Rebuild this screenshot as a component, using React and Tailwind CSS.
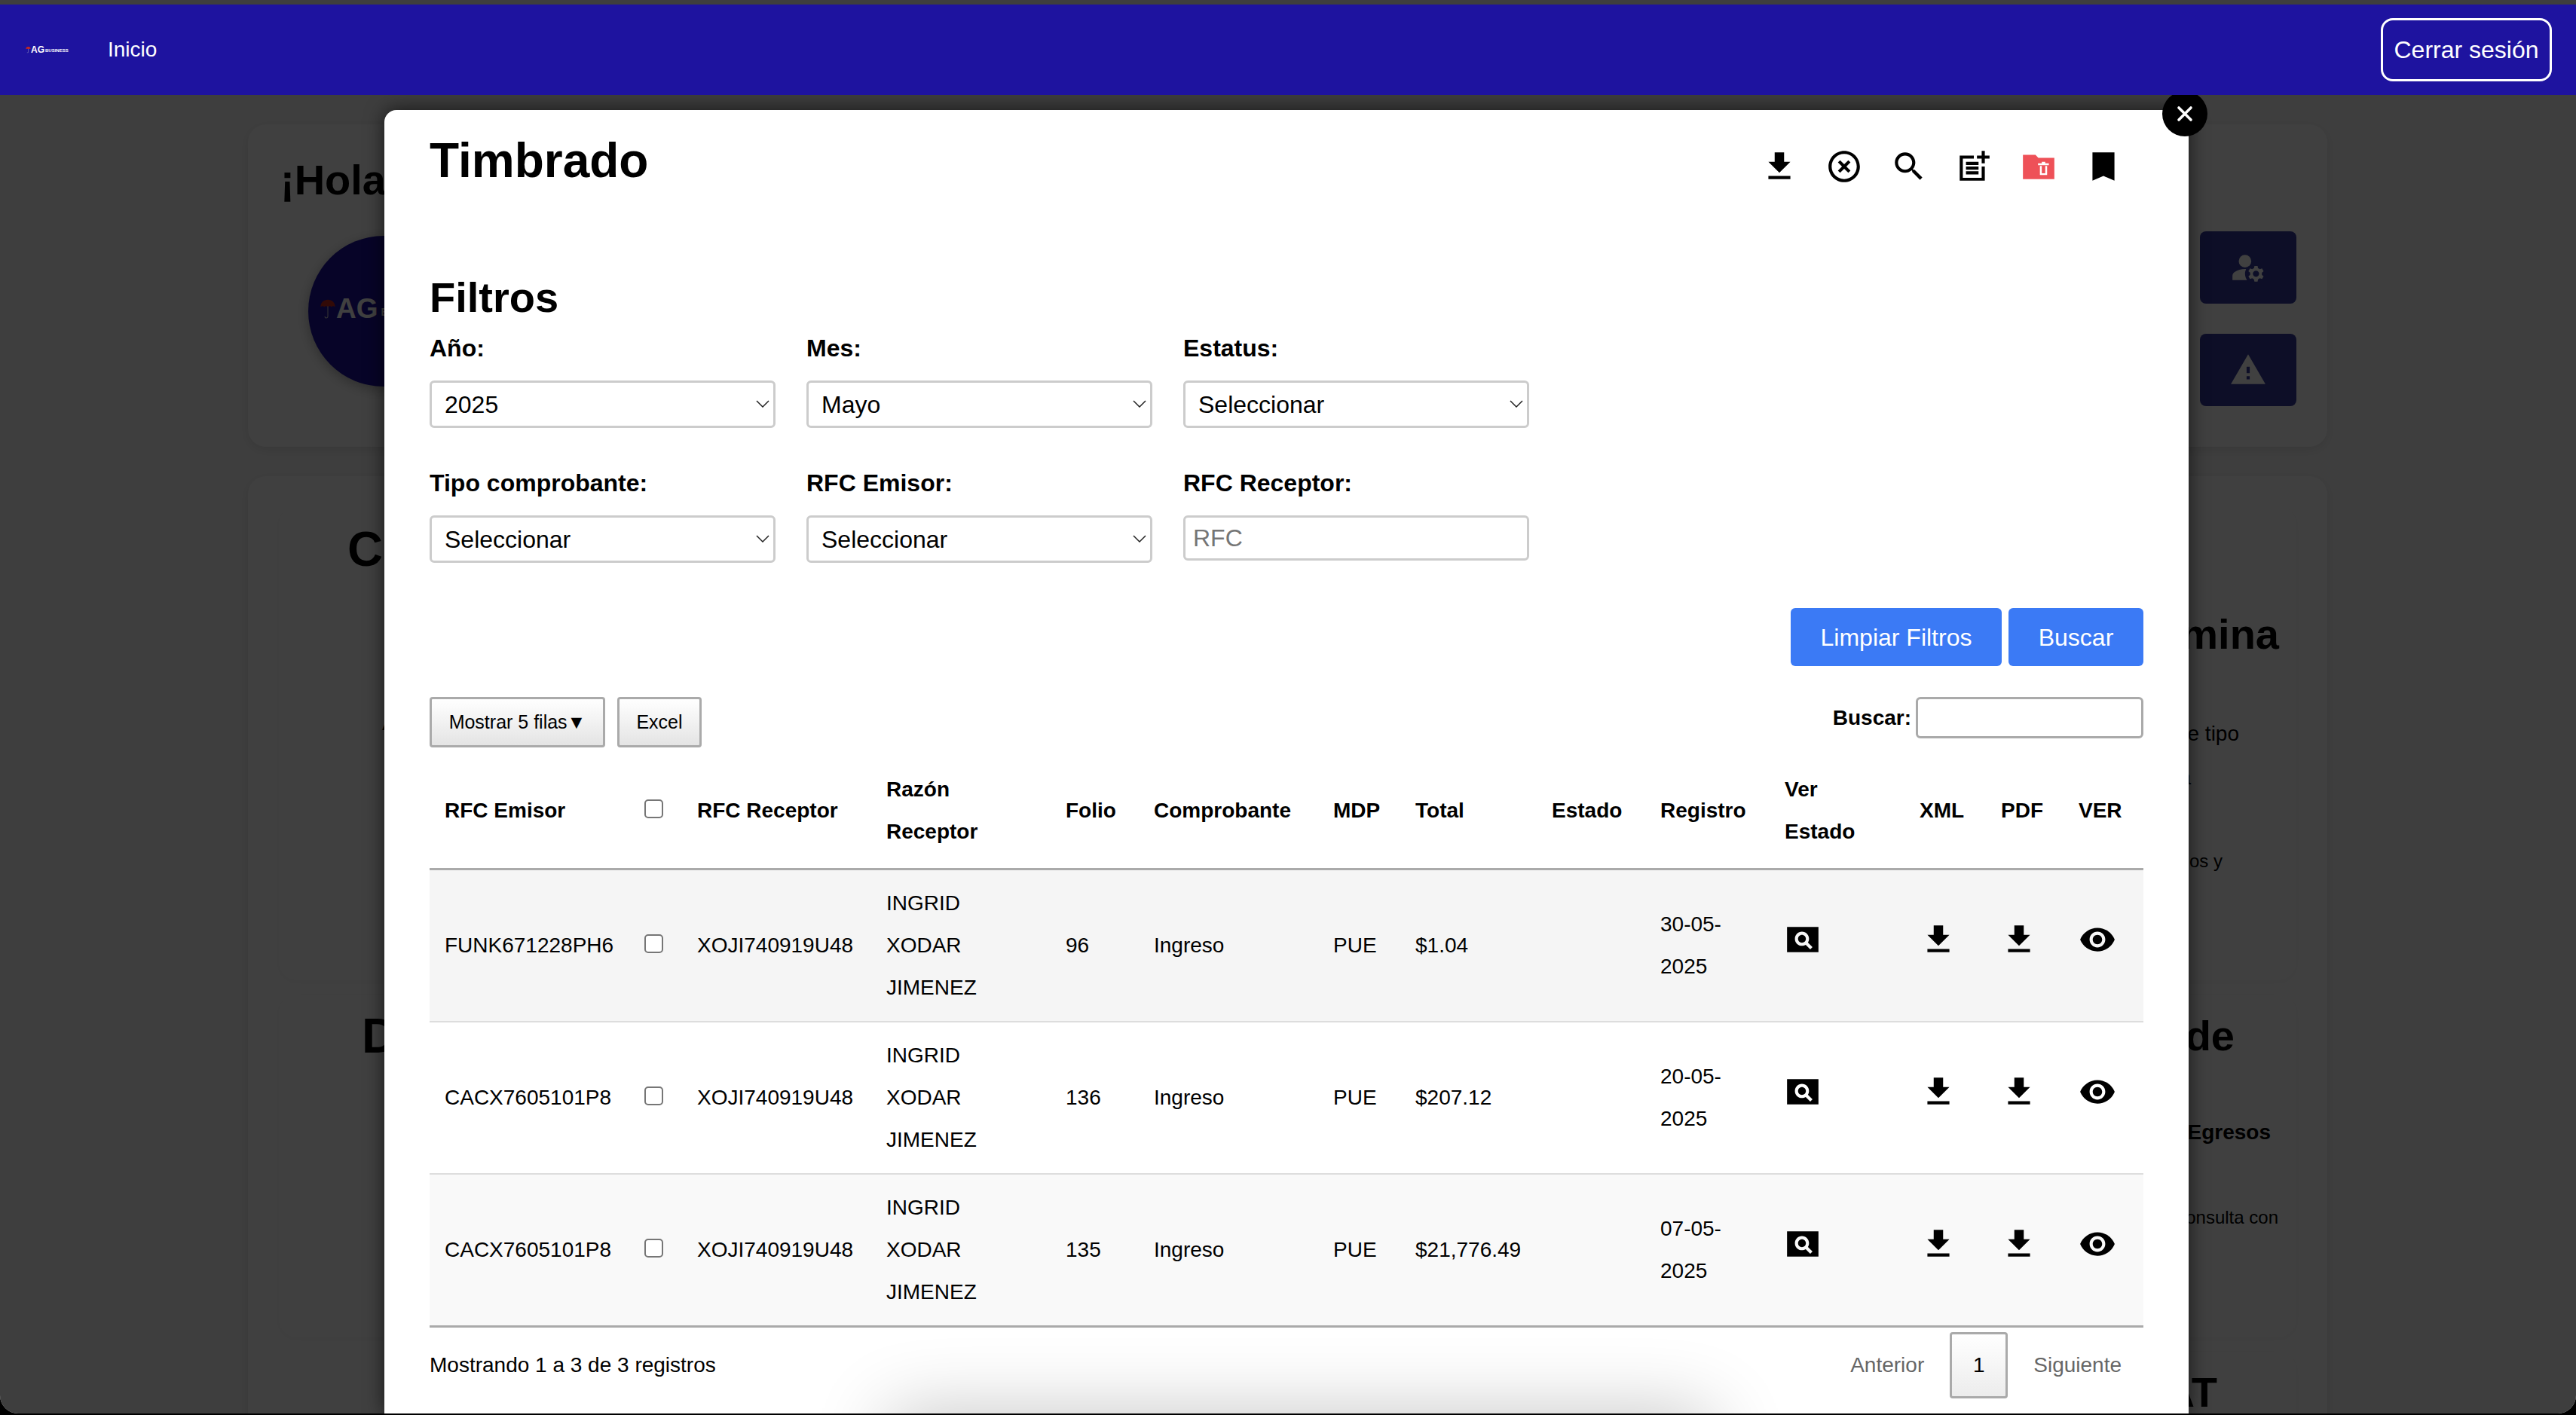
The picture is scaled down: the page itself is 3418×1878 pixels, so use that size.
import React from "react";

const rows = [
  { rfc: "FUNK671228PH6", folio: "96", total: "$1.04", fecha: "30-05-2025", bg: "bg-[#f5f5f5]", border: "" },
  { rfc: "CACX7605101P8", folio: "136", total: "$207.12", fecha: "20-05-2025", bg: "bg-white", border: "border-t-2 border-[#ddd]" },
  { rfc: "CACX7605101P8", folio: "135", total: "$21,776.49", fecha: "07-05-2025", bg: "bg-[#f9f9f9]", border: "border-t-2 border-[#ddd]" },
];

const colWidths = ["w-[265px]", "w-[70px]", "w-[251px]", "w-[238px]", "w-[117px]", "w-[238px]", "w-[109px]", "w-[181px]", "w-[144px]", "w-[165px]", "w-[179px]", "w-[108px]", "w-[103px]", "w-[106px]"];

const headers = ["RFC Emisor", null, "RFC Receptor", "Razón Receptor", "Folio", "Comprobante", "MDP", "Total", "Estado", "Registro", "Ver Estado", "XML", "PDF", "VER"];

function Icon({ d, className = "", evenodd = false }) {
  return (
    <svg viewBox="0 0 24 24" className={`h-[50px] w-[50px] fill-current ${className}`}>
      <path d={d} fillRule={evenodd ? "evenodd" : "nonzero"} />
    </svg>
  );
}

const downloadPath = "M19 9h-4V3H9v6H5l7 7 7-7zM5 18v2h14v-2H5z";
const eyePath = "M12 4.5C7 4.5 2.73 7.61 1 12c1.73 4.39 6 7.5 11 7.5s9.27-3.11 11-7.5c-1.73-4.39-6-7.5-11-7.5zM12 17c-2.76 0-5-2.24-5-5s2.24-5 5-5 5 2.24 5 5-2.24 5-5 5zm0-8c-1.66 0-3 1.34-3 3s1.34 3 3 3 3-1.34 3-3-1.34-3-3-3z";
const pageviewPath = "M11.5 9C10.12 9 9 10.12 9 11.5s1.12 2.5 2.5 2.5 2.5-1.12 2.5-2.5S12.88 9 11.5 9zM22 4H2v16h20V4zm-5.21 14.21-2.91-2.91c-.69.44-1.51.7-2.38.7C9.01 16 7 13.99 7 11.5S9.01 7 11.5 7 16 9.01 16 11.5c0 .88-.26 1.69-.7 2.39l2.91 2.9-1.42 1.42z";

function Umbrella({ className }) {
  return (
    <svg viewBox="0 0 24 32" className={className}>
      <path d="M1 13C1 6 6 2 12 2s11 4 11 11c-2-1.6-4-1.6-5.5 0-1.500-1.600-3.500-1.600-5.500 0-2-1.600-4-1.600-5.500 0C5 11.400 3 11.400 1 13z" fill="#c8281e" />
      <path d="M12 12v15.500c0 3-4.500 3-4.500 0" fill="none" stroke="#cfcfcf" strokeWidth="1.200" />
    </svg>
  );
}

function Field({ label, children }) {
  return (
    <div>
      <label className="block h-[56px] text-[32px] font-bold leading-[56px]">{label}</label>
      <div className="mt-[15px]">{children}</div>
    </div>
  );
}

function Select({ value }) {
  return (
    <div className="relative">
      <select className="block h-[63px] w-full appearance-none rounded-[6px] border-[3px] border-[#ccc] bg-white pl-[17px] text-[32px] text-black">
        <option>{value}</option>
      </select>
      <svg viewBox="0 0 18 10" className="pointer-events-none absolute right-[8px] top-[26px] h-[10px] w-[18px]">
        <path d="M1 1l8 8 8-8" fill="none" stroke="#222" strokeWidth="1.500" />
      </svg>
    </div>
  );
}

function Check() {
  return <input type="checkbox" className="mb-[6px] block h-[25px] w-[25px] appearance-none rounded-[5px] border-2 border-[#767676] bg-white" />;
}

function Background() {
  return (
    <main className="mx-[329px] w-[2759px]">
      <section className="mt-[39px] flex h-[428px] justify-between rounded-[24px] bg-white pl-[43px] pr-[41px] pt-[34px] shadow-[0_4px_16px_rgba(0,0,0,0.1)]">
        <div>
          <h1 className="h-[80px] text-[56px] font-bold leading-[80px]">¡Hola</h1>
          <div className="ml-[37px] mt-[34px] flex h-[200px] w-[200px] items-center rounded-full bg-[#1e139f] pb-[6px] pl-[15px] shadow-[0_4px_16px_rgba(0,0,0,0.3)]">
            <Umbrella className="h-[28px] w-[22px]" />
            <span className="text-[37px] font-bold text-white">AG</span>
            <span className="ml-[4px] mt-[8px] text-[14px] font-bold text-white">BUSINESS</span>
          </div>
        </div>
        <div className="mt-[108px] flex flex-col gap-[40px]">
          <div className="flex h-[96px] w-[128px] items-center justify-center rounded-[8px] bg-[#343a9c] text-white">
            <svg viewBox="0 0 24 24" className="h-[50px] w-[50px] fill-current">
              <circle cx="10" cy="8" r="4" />
              <path d="M10.670 13.020c-.22-.01-.44-.02-.67-.02-2.420 0-4.680.67-6.610 1.820-.88.52-1.390 1.500-1.390 2.530V20h9.260c-.79-1.130-1.260-2.510-1.260-4 0-1.070.25-2.070.67-2.980z" />
              <path d="M20.750 16c0-.22-.03-.42-.06-.63l1.140-1.010-1-1.730-1.450.49c-.32-.27-.68-.48-1.080-.63L18 11h-2l-.3 1.490c-.4.15-.76.36-1.080.63l-1.450-.49-1 1.730 1.140 1.010c-.03.21-.06.41-.06.63s.03.42.06.63l-1.140 1.010 1 1.730 1.450-.49c.32.27.68.48 1.080.63L16 21h2l.3-1.490c.4-.15.76-.36 1.080-.63l1.450.49 1-1.730-1.140-1.010c.03-.21.06-.41.06-.63zM17 18c-1.100 0-2-.9-2-2s.9-2 2-2 2 .9 2 2-.9 2-2 2z" />
            </svg>
          </div>
          <div className="flex h-[96px] w-[128px] items-center justify-center rounded-[8px] bg-[#343a9c] text-white">
            <Icon d="M1 21h22L12 2 1 21zm12-3h-2v-2h2v2zm0-4h-2v-4h2v4z" />
          </div>
        </div>
      </section>

      <section className="mt-[39px] grid grid-cols-3 grid-rows-[629px_455px_300px] gap-x-[40px] gap-y-[19px] rounded-[24px] bg-white px-[41px] pt-[40px] shadow-[0_4px_16px_rgba(0,0,0,0.1)]">
        <div className="rounded-[24px] bg-white pl-[91px] shadow-[0_2px_10px_rgba(0,0,0,0.04)]">
          <h2 className="text-[65px] font-bold leading-[113px]">Cancelaciones</h2>
          <p className="ml-[46px] mt-[147px] text-[28px] leading-[56px]">Administra</p>
        </div>
        <div className="rounded-[24px] bg-white shadow-[0_2px_10px_rgba(0,0,0,0.04)]" />
        <div className="rounded-[24px] bg-white text-right shadow-[0_2px_10px_rgba(0,0,0,0.04)]">
          <h2 className="mt-[113px] pr-[23px] text-[56px] font-bold leading-[113px]">Nómina</h2>
          <p className="mt-[48px] pr-[76px] text-[28px] leading-[56px]">Consulta de tipo</p>
          <p className="mt-[2px] pr-[140px] text-[28px] leading-[56px]">nómina</p>
          <p className="mt-[59px] pr-[98px] text-[24px] leading-[48px]">comprobantes emitidos y</p>
        </div>

        <div className="rounded-[24px] bg-white pl-[110px] shadow-[0_2px_10px_rgba(0,0,0,0.04)]">
          <h2 className="-mt-[2px] text-[65px] font-bold leading-[113px]">Descargas</h2>
        </div>
        <div className="rounded-[24px] bg-white shadow-[0_2px_10px_rgba(0,0,0,0.04)]" />
        <div className="rounded-[24px] bg-white text-right shadow-[0_2px_10px_rgba(0,0,0,0.04)]">
          <h2 className="-mt-[2px] pr-[82px] text-[56px] font-bold leading-[113px]">Reporte de</h2>
          <p className="mt-[44px] pr-[34px] text-[28px] font-bold leading-[56px]">Ingresos y Egresos</p>
          <p className="mt-[61px] pr-[24px] text-[24px] leading-[48px]">Realiza tu consulta con</p>
        </div>

        <div />
        <div />
        <div className="rounded-[24px] bg-white text-right shadow-[0_2px_10px_rgba(0,0,0,0.04)]">
          <h2 className="pr-[105px] text-[56px] font-bold leading-[108px]">SAT</h2>
        </div>
      </section>
    </main>
  );
}

function Modal() {
  return (
    <div className="absolute bottom-0 left-[510px] top-[146px] z-10 w-[2394px] rounded-t-[16px] bg-white shadow-[0_0_26px_rgba(0,0,0,0.65)]">
      <div className="relative h-full overflow-hidden rounded-t-[16px] px-[60px]">
        <div className="absolute left-[670px] top-full h-[100px] w-[1090px] shadow-[0_0_100px_rgba(0,0,0,0.24)]" />

        <header className="mt-[31px] flex items-start justify-between pt-[31px]">
          <h1 className="-mt-[31px] h-[72px] text-[64px] font-bold leading-[72px]">Timbrado</h1>
          <div className="-mt-[12px] flex gap-[36px] pr-[28px]">
            <Icon d={downloadPath} />
            <Icon d="M14.590 8 12 10.590 9.410 8 8 9.410 10.590 12 8 14.590 9.410 16 12 13.410 14.590 16 16 14.590 13.410 12 16 9.410 14.590 8zM12 2C6.470 2 2 6.470 2 12s4.470 10 10 10 10-4.470 10-10S17.530 2 12 2zm0 18c-4.410 0-8-3.590-8-8s3.590-8 8-8 8 3.590 8 8-3.590 8-8 8z" />
            <Icon d="M15.500 14h-.79l-.28-.27C15.410 12.590 16 11.110 16 9.500 16 5.910 13.090 3 9.500 3S3 5.910 3 9.500 5.910 16 9.500 16c1.610 0 3.090-.59 4.230-1.570l.27.28v.79l5 4.990L20.490 19l-4.990-5zm-6 0C7.010 14 5 11.990 5 9.500S7.010 5 9.500 5 14 7.010 14 9.500 11.990 14 9.500 14z" />
            <Icon d="M17 19.220H5V7h7V5H3v16h16v-9h-2zM19 2h-2v3h-3v2h3v2.990h2V7h3V5h-3zM7 9h8v2H7zM7 12h8v2H7zM7 15h8v2H7z" />
            <svg viewBox="0 0 24 24" className="h-[50px] w-[50px]">
              <path d="M2 4.500h8l1.800 2H22V20H2z" fill="#ee5158" />
              <path fillRule="evenodd" d="M14 9h2.200v1h2.300v1.200h-6.900V10H14zM12.800 11.600h4.600v5.800h-4.600zM14 11.600v4.700h2.200v-4.700z" fill="#fff" />
            </svg>
            <Icon d="M19 3H5v18l7-3 7 3z" />
          </div>
        </header>

        <h2 className="mt-[111px] h-[70px] text-[56px] font-bold leading-[70px]">Filtros</h2>

        <div className="mt-[4px] grid grid-cols-[459px_459px_459px] gap-x-[41px] gap-y-[45px]">
          <Field label="Año:"><Select value="2025" /></Field>
          <Field label="Mes:"><Select value="Mayo" /></Field>
          <Field label="Estatus:"><Select value="Seleccionar" /></Field>
          <Field label="Tipo comprobante:"><Select value="Seleccionar" /></Field>
          <Field label="RFC Emisor:"><Select value="Seleccionar" /></Field>
          <Field label="RFC Receptor:">
            <input placeholder="RFC" className="block h-[60px] w-full rounded-[6px] border-[3px] border-[#ccc] bg-white pl-[10px] text-[32px] placeholder:text-[#757575]" />
          </Field>
        </div>

        <div className="mt-[60px] flex justify-end gap-[9px]">
          <button className="h-[77px] w-[280px] rounded-[6px] bg-[#3b7af5] text-[32px] text-white">Limpiar Filtros</button>
          <button className="h-[77px] w-[179px] rounded-[6px] bg-[#3b7af5] text-[32px] text-white">Buscar</button>
        </div>

        <div className="mt-[41px] flex h-[67px] items-start justify-between">
          <div className="flex gap-[16px]">
            <button className="h-[67px] w-[233px] rounded-[4px] border-[3px] border-[#aaa] bg-gradient-to-b from-white to-[#e4e4e4] text-[25px]">Mostrar 5 filas▼</button>
            <button className="h-[67px] w-[112px] rounded-[4px] border-[3px] border-[#aaa] bg-gradient-to-b from-white to-[#e4e4e4] text-[25px]">Excel</button>
          </div>
          <div className="flex items-center gap-[6px]">
            <label className="text-[28px] font-bold">Buscar:</label>
            <input className="h-[55px] w-[302px] rounded-[6px] border-[3px] border-[#aaa] bg-white" />
          </div>
        </div>

        <table className="mt-[8px] w-[2274px] table-fixed border-separate border-spacing-0 text-left text-[28px] leading-[56px]">
          <colgroup>
            {colWidths.map((w, i) => <col key={i} className={w} />)}
          </colgroup>
          <thead>
            <tr>
              {headers.map((h, i) => (
                <th key={i} className="border-b-[3px] border-[#aaa] px-[20px] py-[20px] font-bold">
                  {h === null ? <Check /> : h}
                </th>
              ))}
            </tr>
          </thead>
          <tbody>
            {rows.map((r, i) => {
              const td = `${r.bg} ${r.border} px-[20px] py-[16px]`;
              return (
                <tr key={i}>
                  <td className={td}>{r.rfc}</td>
                  <td className={td}><Check /></td>
                  <td className={td}>XOJI740919U48</td>
                  <td className={td}>INGRID XODAR JIMENEZ</td>
                  <td className={td}>{r.folio}</td>
                  <td className={td}>Ingreso</td>
                  <td className={td}>PUE</td>
                  <td className={`${td} whitespace-nowrap`}>{r.total}</td>
                  <td className={td}></td>
                  <td className={td}>{r.fecha}</td>
                  <td className={td}><Icon d={pageviewPath} evenodd className="mb-[16px] block -translate-x-[1px]" /></td>
                  <td className={td}><Icon d={downloadPath} className="mb-[16px] block" /></td>
                  <td className={td}><Icon d={downloadPath} className="mb-[16px] block -translate-x-[1px]" /></td>
                  <td className={td}><Icon d={eyePath} className="mb-[16px] block" /></td>
                </tr>
              );
            })}
          </tbody>
          <tfoot>
            <tr>
              <td colSpan={14} className="border-t-[3px] border-[#aaa] p-0" />
            </tr>
          </tfoot>
        </table>

        <div className="mt-[6px] flex items-center justify-between text-[28px]">
          <span>Mostrando 1 a 3 de 3 registros</span>
          <div className="flex items-center pr-[29px] text-[#666]">
            <span>Anterior</span>
            <span className="ml-[34px] flex h-[88px] w-[77px] items-center justify-center rounded-[4px] border-[3px] border-[#aaa] bg-gradient-to-b from-white to-[#ececec] text-black">1</span>
            <span className="ml-[34px]">Siguiente</span>
          </div>
        </div>
      </div>
    </div>
  );
}

export default function App() {
  return (
    <div className="h-[1878px] w-[3418px] overflow-hidden bg-black text-black [font-family:'Liberation_Sans',Arial,sans-serif]">
      <div className="relative h-[1876px] overflow-hidden rounded-b-[24px] bg-[#f8f8f8] pt-[6px]">
        <nav className="relative z-30 flex h-[120px] items-center justify-between bg-[#1e139f] pl-[34px] pr-[32px] text-white">
          <div className="flex items-center">
            <div className="flex w-[109px] items-center">
              <Umbrella className="h-[12px] w-[7px]" />
              <span className="text-[12px] font-bold leading-none">AG</span>
              <span className="ml-[1px] mt-[2px] text-[6px] font-bold leading-none">BUSINESS</span>
            </div>
            <a className="text-[28px]">Inicio</a>
          </div>
          <button className="h-[84px] w-[227px] rounded-[16px] border-[3px] border-white text-[32px] text-white">Cerrar sesión</button>
        </nav>

        <Background />

        <div className="absolute inset-0 z-10 bg-black/75" />
        <Modal />

        <button className="absolute left-[2869px] top-[121px] z-20 flex h-[60px] w-[60px] items-center justify-center rounded-full bg-black text-white">
          <svg viewBox="0 0 24 24" className="h-[24px] w-[24px]">
            <path d="M4 4l16 16M20 4L4 20" stroke="currentColor" strokeWidth="3.600" strokeLinecap="round" />
          </svg>
        </button>
      </div>
    </div>
  );
}
